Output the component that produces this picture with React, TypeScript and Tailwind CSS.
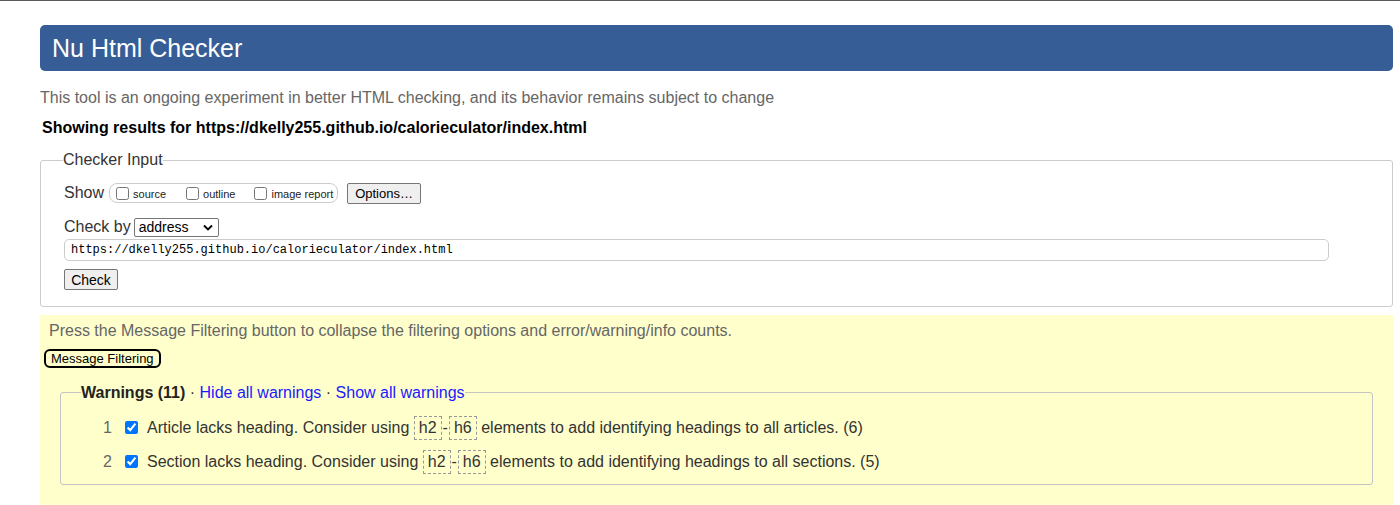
import React from "react";

const sans = { fontFamily: '"Liberation Sans", Arial, sans-serif' };

function Code({ children }: { children: React.ReactNode }) {
  return (
    <span className="inline-block border border-dashed border-[#999] px-[4px] leading-[22px] text-[#333]">
      {children}
    </span>
  );
}

function Warning({ n, text, rest }: { n: number; text: string; rest: string }) {
  return (
    <li className="flex h-[34px] items-center">
      <span className="w-[21px] pl-[42px] box-content text-[#666]">{n}</span>
      <input
        type="checkbox"
        defaultChecked
        className="ml-[1px] mr-[9px] h-[13px] w-[13px] accent-[#0075ff]"
      />
      <span className="text-[#333]">
        {text} <Code>h2</Code>
        <span className="mx-[1px]">-</span>
        <Code>h6</Code> {rest}
      </span>
    </li>
  );
}

export default function App() {
  return (
    <div
      className="min-h-[505px] border-t border-[#5a5a5a] bg-white pl-[40px] pr-[7px] pt-[24px] text-[16px] text-[#222]"
      style={sans}
    >
      <header className="flex h-[46px] items-center rounded-[5px] bg-[#365d95] pl-[12px]">
        <h1 className="text-[25px] leading-none text-white">Nu Html Checker</h1>
      </header>

      <p className="mt-[17px] leading-[20px] text-[#666]">
        This tool is an ongoing experiment in better HTML checking, and its behavior remains
        subject to change
      </p>
      <p className="mt-[10px] pl-[2px] font-bold leading-[20px] text-black">
        Showing results for https://dkelly255.github.io/calorieculator/index.html
      </p>

      <fieldset className="mt-[13px] rounded-[3px] border border-[#ccc] pb-[14px] pl-[23px] pr-[22px]">
        <legend className="-ml-[1px] leading-[18px] text-[#333]">Checker Input</legend>

        <div className="mt-[14px] flex h-[20px] items-center">
          <span className="text-[#333]">Show</span>
          <span className="ml-[5px] flex h-[20px] w-[229px] items-center rounded-[8px] border border-[#ccc] pl-[6px] text-[11px]">
            <input type="checkbox" className="h-[13px] w-[13px]" />
            <span className="ml-[4px] mt-[2px]">source</span>
            <input type="checkbox" className="ml-[20px] h-[13px] w-[13px]" />
            <span className="ml-[4px] mt-[2px]">outline</span>
            <input type="checkbox" className="ml-[19px] h-[13px] w-[13px]" />
            <span className="ml-[4px] mt-[2px]">image report</span>
          </span>
          <button className="ml-[9px] h-[21px] w-[74px] rounded-[2px] border border-[#767676] bg-[#efefef] text-[13px] leading-none text-black">
            Options…
          </button>
        </div>

        <div className="mt-[14px] flex h-[20px] items-center">
          <span className="text-[#333]">Check by</span>
          <span className="ml-[3px] flex h-[19px] w-[85px] items-center justify-between rounded-[2px] border border-[#767676] pl-[4px] pr-[5px] text-[14px] text-black">
            address
            <svg width="10" height="7" viewBox="0 0 10 7" fill="none">
              <path d="M1 1.5 L5 5.5 L9 1.5" stroke="black" strokeWidth="1.8" />
            </svg>
          </span>
        </div>

        <div
          className="mt-[2px] flex h-[22px] w-[1265px] items-center rounded-[5px] border border-[#ccc] pl-[6px] text-[12px] text-black"
          style={{ fontFamily: '"Liberation Mono", "DejaVu Sans Mono", monospace' }}
        >
          https://dkelly255.github.io/calorieculator/index.html
        </div>

        <button className="mt-[8px] h-[21px] w-[54px] rounded-[2px] border border-[#767676] bg-[#efefef] text-[14px] leading-none text-black">
          Check
        </button>
      </fieldset>

      <section className="mt-[8px] min-h-[191px] bg-[#ffffcc] pl-[4px] pr-[20px] pt-[6px]">
        <p className="pl-[5px] leading-[20px] text-[#666]">
          Press the Message Filtering button to collapse the filtering options and
          error/warning/info counts.
        </p>
        <button className="mt-[8px] h-[19px] rounded-[6px] border-2 border-black px-[5px] text-[13px] leading-none text-black">
          Message Filtering
        </button>

        <fieldset className="ml-[16px] mt-[13px] rounded-[3px] border border-[#c4c4c4] pb-[5px] pl-[20px]">
          <legend className="leading-[20px]">
            <strong className="text-[#222]">Warnings (11)</strong>
            <span className="text-[#333]"> · </span>
            <a className="text-[#1a1aff]">Hide all warnings</a>
            <span className="text-[#333]"> · </span>
            <a className="text-[#1a1aff]">Show all warnings</a>
          </legend>
          <ol className="-ml-[20px] mt-[8px]">
            <Warning
              n={1}
              text="Article lacks heading. Consider using"
              rest="elements to add identifying headings to all articles. (6)"
            />
            <Warning
              n={2}
              text="Section lacks heading. Consider using"
              rest="elements to add identifying headings to all sections. (5)"
            />
          </ol>
        </fieldset>
      </section>
    </div>
  );
}
